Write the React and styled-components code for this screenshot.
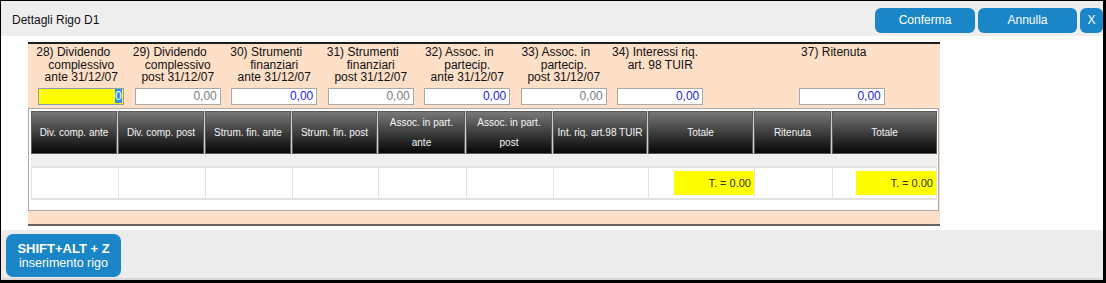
import React from "react"
import styled, { createGlobalStyle } from "styled-components"

const GlobalStyle = createGlobalStyle`
  body {
    margin: 0;
    background: #fff;
    font-family: "Liberation Sans", Arial, sans-serif;
  }
`

const Frame = styled.div`
  width: 1106px;
  height: 283px;
  box-sizing: border-box;
  border: 1px solid #000;
  border-right-width: 3px;
  border-bottom-width: 3px;
  display: flex;
  flex-direction: column;
  background: #fff;
  overflow: hidden;
`

const TopBar = styled.div`
  height: 35px;
  flex: none;
  box-sizing: border-box;
  padding: 3px 0 0 11px;
  background: #eeeeee;
  display: flex;
  align-items: center;
`

const Title = styled.div`
  font-size: 12px;
  color: #111;
`

const Actions = styled.div`
  margin-left: auto;
  display: flex;
  gap: 3px;
`

const BlueButton = styled.button`
  width: ${({ $w }) => $w}px;
  height: 25px;
  padding: 0;
  border: none;
  border-radius: 6px;
  background: #1a86c7;
  color: #fff;
  font-family: "Liberation Sans", Arial, sans-serif;
  font-size: 12px;
`

const Content = styled.div`
  flex: 1;
  padding: 6px 0 0 27px;
`

const Panel = styled.div`
  width: 912px;
  height: 184px;
  box-sizing: border-box;
  background: #fedfc8;
  border-top: 2px solid #1c1c1c;
  border-bottom: 2px solid #6a625c;
`

const Fields = styled.div`
  display: grid;
  grid-template-columns: repeat(7, 96.5px) 85px 96.5px;
  padding: 2px 0 0 5px;
`

const Field = styled.div`
  grid-column: ${({ $col }) => $col};
  display: flex;
  flex-direction: column;
  align-items: center;
`

const Label = styled.div`
  align-self: stretch;
  height: 38px;
  font-size: 12px;
  line-height: 12.5px;
  color: #111;
  text-align: center;
  white-space: nowrap;
`

const Lead = styled.div`
  margin-right: 16px;
`

const ValueBox = styled.div`
  margin-top: 4px;
  width: 86px;
  height: 17px;
  box-sizing: border-box;
  border: 1px solid ${({ $tone }) => ($tone === "focus" ? "#8c9bb8" : "#a9a9a9")};
  background: ${({ $tone }) => ($tone === "focus" ? "#ffff00" : "#fff")};
  color: ${({ $tone }) => ($tone === "blue" ? "#1d1dd8" : "#7d7d7d")};
  font-size: 12px;
  line-height: 15px;
  text-align: right;
  padding-right: ${({ $tone }) => ($tone === "focus" ? 1 : 3)}px;
`

const Selected = styled.span`
  background: #3390f0;
  color: #fff;
  padding: 0 0.5px;
`

const Table = styled.div`
  margin-top: 3px;
  width: 911px;
  height: 103px;
  box-sizing: border-box;
  border: 1px solid #a9a9a9;
  background: #fff;
  padding: 2px 1px 0 2px;
`

const cols = "86px 86px 86px 85px 87px 86px 94px 105px 77px minmax(0, 1fr)"

const HeadRow = styled.div`
  display: grid;
  grid-template-columns: ${cols};
  column-gap: 1px;
  height: 43px;
  background: #cfcfcf;
`

const HeadCell = styled.div`
  display: flex;
  align-items: center;
  justify-content: center;
  text-align: center;
  background: linear-gradient(to bottom, #7a7a7a 0%, #3e3e3e 50%, #040404 100%);
  box-shadow: inset 0 0 0 1px #5a5a5a;
  color: #f4f4f4;
  font-size: 10px;
  line-height: 20px;
`

const Strip = styled.div`
  height: 12px;
  background: #f0f0f0;
`

const BodyRow = styled.div`
  display: grid;
  grid-template-columns: ${cols};
  column-gap: 1px;
  height: 34px;
  box-sizing: border-box;
  background: #e2e2e2;
  border: 2px solid #e2e2e2;
  border-left-width: 1px;
  border-right-width: 1px;
`

const BodyCell = styled.div`
  background: #fff;
  display: flex;
  align-items: center;
  justify-content: flex-end;
`

const Total = styled.div`
  width: 80px;
  height: 24px;
  box-sizing: border-box;
  padding-right: 3px;
  background: #ffff00;
  color: #333;
  font-size: 11px;
  line-height: 24px;
  text-align: right;
`

const BottomBar = styled.div`
  height: 50px;
  flex: none;
  box-sizing: border-box;
  background: #ececec;
  border-bottom: 2px solid #d8d8d8;
  padding: 4px 0 0 5px;
`

const ShortcutButton = styled.button`
  width: 115px;
  height: 43px;
  padding: 0;
  border: none;
  border-radius: 7px;
  background: #1a86c7;
  color: #fff;
  font-family: "Liberation Sans", Arial, sans-serif;
  line-height: 15px;
  display: flex;
  flex-direction: column;
  align-items: center;
  justify-content: center;
`

const Keys = styled.span`
  font-size: 13px;
  font-weight: bold;
`

const Hint = styled.span`
  font-size: 12.5px;
`

const fields = [
  { col: 1, lines: ["28) Dividendo", "complessivo", "ante 31/12/07"], tone: "focus" },
  { col: 2, lines: ["29) Dividendo", "complessivo", "post 31/12/07"], tone: "muted" },
  { col: 3, lines: ["30) Strumenti", "finanziari", "ante 31/12/07"], tone: "blue" },
  { col: 4, lines: ["31) Strumenti", "finanziari", "post 31/12/07"], tone: "muted" },
  { col: 5, lines: ["32) Assoc. in", "partecip.", "ante 31/12/07"], tone: "blue" },
  { col: 6, lines: ["33) Assoc. in", "partecip.", "post 31/12/07"], tone: "muted" },
  { col: 7, lines: ["34) Interessi riq.", "art. 98 TUIR"], tone: "blue" },
  { col: 9, lines: ["37) Ritenuta"], tone: "blue" },
]

const heads = [
  ["Div. comp. ante"],
  ["Div. comp. post"],
  ["Strum. fin. ante"],
  ["Strum. fin. post"],
  ["Assoc. in part.", "ante"],
  ["Assoc. in part.", "post"],
  ["Int. riq. art.98 TUIR"],
  ["Totale"],
  ["Ritenuta"],
  ["Totale"],
]

export default function App() {
  return (
    <>
      <GlobalStyle />
      <Frame>
        <TopBar>
          <Title>Dettagli Rigo D1</Title>
          <Actions>
            <BlueButton $w={100}>Conferma</BlueButton>
            <BlueButton $w={99}>Annulla</BlueButton>
            <BlueButton $w={23}>X</BlueButton>
          </Actions>
        </TopBar>

        <Content>
          <Panel>
            <Fields>
              {fields.map((f) => (
                <Field key={f.col} $col={f.col}>
                  <Label>
                    <Lead>{f.lines[0]}</Lead>
                    {f.lines.slice(1).map((l) => (
                      <div key={l}>{l}</div>
                    ))}
                  </Label>
                  <ValueBox $tone={f.tone}>
                    {f.tone === "focus" ? <Selected>0</Selected> : "0,00"}
                  </ValueBox>
                </Field>
              ))}
            </Fields>

            <Table>
              <HeadRow>
                {heads.map((h, i) => (
                  <HeadCell key={i}>
                    {h.map((l) => (
                      <React.Fragment key={l}>
                        {l}
                        {h.length > 1 && l === h[0] ? <br /> : null}
                      </React.Fragment>
                    ))}
                  </HeadCell>
                ))}
              </HeadRow>
              <Strip />
              <BodyRow>
                {heads.map((h, i) => (
                  <BodyCell key={i}>
                    {i === 7 || i === 9 ? <Total>T. = 0.00</Total> : null}
                  </BodyCell>
                ))}
              </BodyRow>
            </Table>
          </Panel>
        </Content>

        <BottomBar>
          <ShortcutButton>
            <Keys>SHIFT+ALT + Z</Keys>
            <Hint>inserimento rigo</Hint>
          </ShortcutButton>
        </BottomBar>
      </Frame>
    </>
  )
}
